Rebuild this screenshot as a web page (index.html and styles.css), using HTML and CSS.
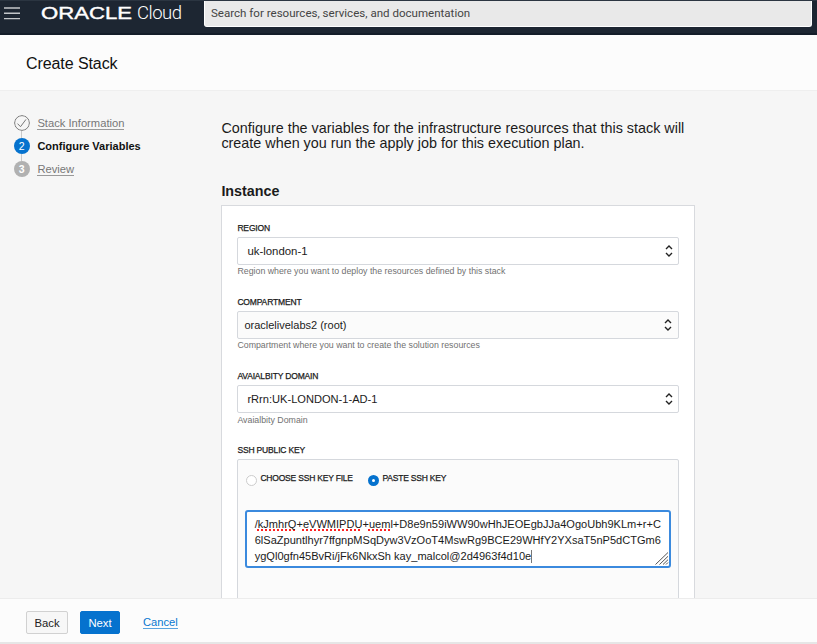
FILE: index.html
```html
<!DOCTYPE html>
<html lang="en">
<head>
<meta charset="utf-8">
<title>Create Stack</title>
<link rel="stylesheet" href="styles.css">
</head>
<body>
<div class="app">
  <header class="topbar">
    <svg class="menu" width="16" height="13" viewBox="0 0 16 13"><path d="M0 1h16M0 6.3h16M0 11.6h16"/></svg>
    <div class="brand"><span class="oracle">ORACLE</span><span class="cloud">Cloud</span></div>
    <div class="search"><span>Search for resources, services, and documentation</span></div>
  </header>
  <div class="titlebar"><h1>Create Stack</h1></div>
  <div class="content">
    <nav class="steps">
      <a class="step done"><svg class="dot" width="16" height="16" viewBox="0 0 16 16"><circle cx="8" cy="8" r="7.4"/><path d="M3.5 8.6l3 3.1L12 4.4"/></svg><span>Stack Information</span></a>
      <a class="step current"><i class="dot">2</i><span>Configure Variables</span></a>
      <a class="step todo"><i class="dot">3</i><span>Review</span></a>
    </nav>
    <main class="main">
      <p class="intro"><span>Configure the variables for the infrastructure resources that this stack will</span><br><span>create when you run the apply job for this execution plan.</span></p>
      <h2>Instance</h2>
      <section class="card">
        <div class="field">
          <label>REGION</label>
          <div class="select"><span class="region">uk-london-1</span><svg width="8" height="12" viewBox="0 0 8 12"><path d="M1 4l3-3 3 3M1 8l3 3 3-3"/></svg></div>
          <p class="help">Region where you want to deploy the resources defined by this stack</p>
        </div>
        <div class="field">
          <label>COMPARTMENT</label>
          <div class="select tight"><span>oraclelivelabs2 (root)</span><svg width="8" height="12" viewBox="0 0 8 12"><path d="M1 4l3-3 3 3M1 8l3 3 3-3"/></svg></div>
          <p class="help">Compartment where you want to create the solution resources</p>
        </div>
        <div class="field">
          <label>AVAIALBITY DOMAIN</label>
          <div class="select"><span>rRrn:UK-LONDON-1-AD-1</span><svg width="8" height="12" viewBox="0 0 8 12"><path d="M1 4l3-3 3 3M1 8l3 3 3-3"/></svg></div>
          <p class="help low">Avaialbity Domain</p>
        </div>
        <div class="field">
          <label>SSH PUBLIC KEY</label>
          <div class="keybox">
            <div class="radios">
              <div class="choice first"><i class="radio"></i><span>CHOOSE SSH KEY FILE</span></div>
              <div class="choice"><i class="radio on"></i><span>PASTE SSH KEY</span></div>
            </div>
            <div class="textarea">
              <div>/<u>kJmhrQ</u>+<u>eVWMIPDU</u>+<u>ueml</u>+D8e9n59iWW90wHhJEOEgbJJa4OgoUbh9KLm+r+C</div>
              <div>6lSaZpuntlhyr7ffgnpMSqDyw3VzOoT4MswRg9BCE29WHfY2YXsaT5nP5dCTGm6</div>
              <div>ygQl0gfn45BvRi/jFk6NkxSh kay_malcol@2d4963f4d10e<i class="caret"></i></div>
              <svg class="grip" width="14" height="13" viewBox="0 0 14 13"><path d="M.5 12.5L13 .5M4.5 12.5L13 4.3M8 12.5l5-4.8M11 12.5l2-2"/></svg>
            </div>
          </div>
        </div>
      </section>
    </main>
  </div>
  <footer class="actions">
    <button class="btn back"><span>Back</span></button>
    <button class="btn next"><span>Next</span></button>
    <a class="cancel">Cancel</a>
  </footer>
</div>
</body>
</html>
```
FILE: styles.css
```css
* { box-sizing: border-box; }
body { margin: 0; font-family: "Liberation Sans", Arial, sans-serif; color: #1b1b1b; }
h1, h2, p { margin: 0; font-weight: 400; }
span { white-space: nowrap; }
.app { width: 817px; height: 644px; display: flex; flex-direction: column; overflow: hidden; background: #fcfcfc; }

.topbar { flex: none; height: 35px; display: flex; align-items: flex-start; background: #1d2632; border-top: 1px solid #2b3541; border-bottom: 2px solid #141d29; }
.menu { margin: 6px 0 0 4px; stroke: #c3c6ca; stroke-width: 1.4; }
.brand { width: 184px; padding-left: 21px; display: flex; color: #fff; line-height: 25px; }
.oracle { width: 96px; font-size: 16.5px; font-weight: 400; -webkit-text-stroke: .4px #fff; transform: scaleX(1.34); transform-origin: 0 50%; }
.cloud { font-family: Roboto, sans-serif; font-size: 18.5px; font-weight: 300; letter-spacing: -.5px; }
.search { width: 608px; height: 26px; padding: 0 0 2px 6px; display: flex; align-items: center; background: #e9e9e9; border: solid #fff; border-width: 0 1px 1px; border-radius: 0 0 3px 3px; color: #444; font: 11.55px Roboto, sans-serif; }

.titlebar { flex: none; height: 56px; padding: 0 26px; display: flex; align-items: center; border-bottom: 1px solid #efefef; }
h1 { font-size: 16px; letter-spacing: -.08px; color: #111; padding-top: 2px; }

.content { flex: 1; min-height: 0; overflow: hidden; display: flex; background: #f6f6f6; }
.steps { width: 221.4px; padding: 23.5px 0 0 13.7px; }
.step { height: 23px; display: flex; align-items: flex-start; font-size: 11.2px; line-height: 18px; color: #767676; position: relative; }
.step + .step::before { content: ""; position: absolute; left: 7px; top: -7px; width: 1px; height: 7px; background: #c9c9c9; }
.step span { margin-left: 7.7px; line-height: 13px; margin-top: 2.5px; height: 13px; }
.done span, .todo span { border-bottom: 1px solid #999; }
.done svg { fill: none; stroke: #777; stroke-width: 1; }
.dot { flex: none; width: 16px; height: 16px; border-radius: 50%; }
i.dot { font-style: normal; font-size: 10.5px; line-height: 16px; text-align: center; color: #fff; }
.current { font-size: 11px; color: #111; font-weight: 700; }
.current .dot { background: #0572ce; font-weight: 400; }
.todo .dot { background: #b1b1b1; font-weight: 700; }

.intro { padding-top: 30px; font-size: 14.36px; line-height: 15px; height: 90px; }
h2 { height: 24px; line-height: 20px; font-size: 14.3px; font-weight: 700; }
.card { width: 473.6px; height: 500px; padding: 11px 15px 0; background: #fff; border: 1px solid #d8dade; }
.field { height: 74px; }
label { display: block; height: 20px; line-height: 22px; font-size: 8.5px; letter-spacing: -.16px; -webkit-text-stroke: .25px #1b1b1b; white-space: nowrap; }
.select { height: 28px; padding: 0 5px 0 9px; display: flex; align-items: center; justify-content: space-between; border: 1px solid #d5d8dd; border-radius: 2px; font-size: 11.1px; }
.region { font-size: 11.4px; }
.tight { padding: 0 6px; font-size: 11px; background: #fbfbfb; }
.select svg { fill: none; stroke: #222; stroke-width: 1.4; }
.help { font-size: 8.8px; line-height: 13px; color: #717171; white-space: nowrap; }
.low { line-height: 14px; }
.keybox { height: 200px; padding: 0 7px; border: 1px solid #d5d8dd; border-radius: 2px; background: #fbfbfb; }
.radios { height: 50px; padding-top: 12px; display: flex; font-size: 8.5px; line-height: 12px; letter-spacing: -.2px; -webkit-text-stroke: .25px #1b1b1b; }
.choice { display: flex; }
.first { width: 122px; }
.radio { width: 11px; height: 11px; margin: 3px 3px 0 1px; border: 1px solid #ccc; border-radius: 50%; background: #fff; }
.radio.on { border: 4px solid #0572ce; }
.textarea { position: relative; height: 58px; padding: 5px 7.3px; border: 2px solid #3b8ade; border-radius: 3px; background: #fff; font-size: 11.06px; line-height: 15.9px; white-space: nowrap; }
u { text-decoration: underline dotted #f22 2px; text-underline-offset: 1px; text-decoration-skip-ink: none; }
.caret { display: inline-block; width: 1px; height: 13px; margin-top: -2px; background: #777; vertical-align: -3px; }
.grip { position: absolute; right: 0; bottom: 1px; fill: none; stroke: #555; stroke-width: 1; }

.actions { flex: none; height: 46px; padding: 12px 0 0 26px; display: flex; align-items: flex-start; background: #fcfcfc; border-top: 1px solid #ececec; box-shadow: inset 0 -2px #e6e6e6; }
.btn { height: 23px; padding: 0; font: 11.3px "Liberation Sans", sans-serif; border: 1px solid #d1d1d1; border-radius: 2px; background: #f7f7f7; color: #222; }
.back { width: 42px; margin-right: 12px; }
.next { width: 40px; background: #0572ce; border-color: #0572ce; color: #fff; }
.cancel { margin: 4px 0 0 23px; font-size: 11.2px; line-height: 14px; height: 14px; color: #0878d0; border-bottom: 1px solid #5aa4df; }
```
